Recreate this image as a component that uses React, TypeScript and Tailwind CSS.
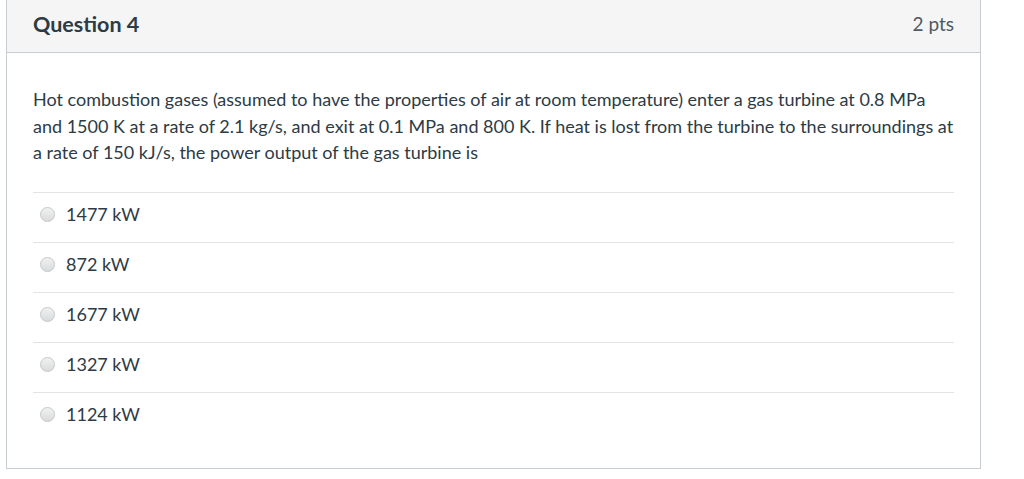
const answers = ["1477 kW", "872 kW", "1677 kW", "1327 kW", "1124 kW"];

export default function App() {
  return (
    <div
      className="h-[479px] w-[1024px] overflow-hidden bg-white text-[#2d3b45]"
      style={{ fontFamily: "Lato, 'Noto Sans', sans-serif" }}
    >
      <div className="ml-[6px] -mt-px w-[975px] border border-[#c7cdd1]">
        <div className="flex h-[53px] items-center justify-between border-b border-[#c7cdd1] bg-[#f5f5f5] px-[26px] pb-[3px]">
          <h2 className="text-[21.5px] font-bold text-[#2d3b45]">Question 4</h2>
          <span className="text-[19px] text-[#4d5a63]">2 pts</span>
        </div>

        <div className="px-[26px] pt-[33px] pb-[26px]">
          <p className="text-[18px] leading-[26.5px]">
            Hot combustion gases (assumed to have the properties of air at room
            temperature) enter a gas turbine at 0.8 MPa and 1500 K at a rate of
            2.1 kg/s, and exit at 0.1 MPa and 800 K. If heat is lost from the
            turbine to the surroundings at a rate of 150 kJ/s, the power output
            of the gas turbine is
          </p>

          <ul className="mt-[26px]">
            {answers.map((a) => (
              <li
                key={a}
                className="flex h-[50px] items-center gap-[11px] border-t border-[#e2e5e7] pl-[7px] pb-[6px]"
              >
                <span className="h-[15px] w-[15px] rounded-full border border-[#c4c8cb] bg-gradient-to-b from-[#f1f1f1] to-[#d9dbdc]" />
                <span className="text-[18px]">{a}</span>
              </li>
            ))}
          </ul>
        </div>
      </div>
    </div>
  );
}
